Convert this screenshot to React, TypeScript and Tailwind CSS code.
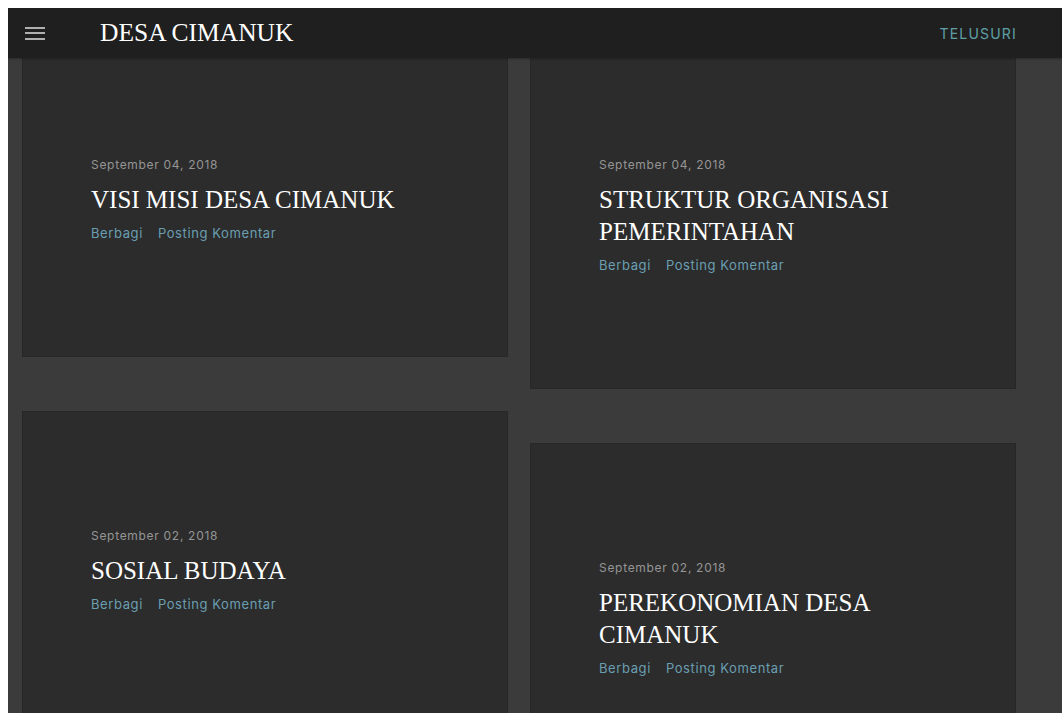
import React from 'react';

interface Post { date: string; title: string; }

const left: Post[] = [
  { date: 'September 04, 2018', title: 'VISI MISI DESA CIMANUK' },
  { date: 'September 02, 2018', title: 'SOSIAL BUDAYA' },
];

const right: Post[] = [
  { date: 'September 04, 2018', title: 'STRUKTUR ORGANISASI PEMERINTAHAN' },
  { date: 'September 02, 2018', title: 'PEREKONOMIAN DESA CIMANUK' },
];

const serif = { fontFamily: '"Liberation Serif", "DejaVu Serif", serif' };

function PostCard({ post }: { post: Post }) {
  return (
    <article className="bg-[#2c2c2c] border border-[#272727] pl-[68px] pr-[60px] pt-[116px] pb-[114px]">
      <div className="text-[12px] leading-4 text-[#959595] font-['Inter',sans-serif] tracking-[0.7px]">{post.date}</div>
      <h2 className="mt-[11px] text-[25px] leading-8 text-white" style={serif}>{post.title}</h2>
      <div className="mt-2 flex gap-[15px] text-[13px] leading-[18px] text-[#6a9fb2] font-['Inter',sans-serif] tracking-[0.6px]">
        <a href="#">Berbagi</a>
        <a href="#">Posting Komentar</a>
      </div>
    </article>
  );
}

export default function App() {
  return (
    <div className="h-screen overflow-hidden bg-white pl-2 pt-2">
      <div className="relative h-full overflow-hidden bg-[#3b3b3b]">
        <header className="absolute inset-x-0 top-0 z-10 h-[50px] bg-[#1f1f1f] flex items-center shadow-[0_1px_2px_rgba(0,0,0,0.3)]">
          <button className="ml-[17px] w-5 flex flex-col gap-[3.5px]">
            <span className="block h-[2px] bg-[#b0b0b0]" />
            <span className="block h-[2px] bg-[#b0b0b0]" />
            <span className="block h-[2px] bg-[#b0b0b0]" />
          </button>
          <h1 className="ml-[55px] text-[25.5px] text-white" style={serif}>DESA CIMANUK</h1>
          <a href="#" className="ml-auto mr-[45px] text-[14px] text-[#5fa0a8] font-['Inter',sans-serif] tracking-[1.2px]">TELUSURI</a>
        </header>

        <main className="flex gap-[22px] px-[14px] pt-8">
          <div className="w-[486px] flex flex-col gap-[54px]">
            {left.map((p) => <PostCard key={p.title} post={p} />)}
          </div>
          <div className="w-[486px] flex flex-col gap-[54px]">
            {right.map((p) => <PostCard key={p.title} post={p} />)}
          </div>
        </main>
      </div>
    </div>
  );
}
